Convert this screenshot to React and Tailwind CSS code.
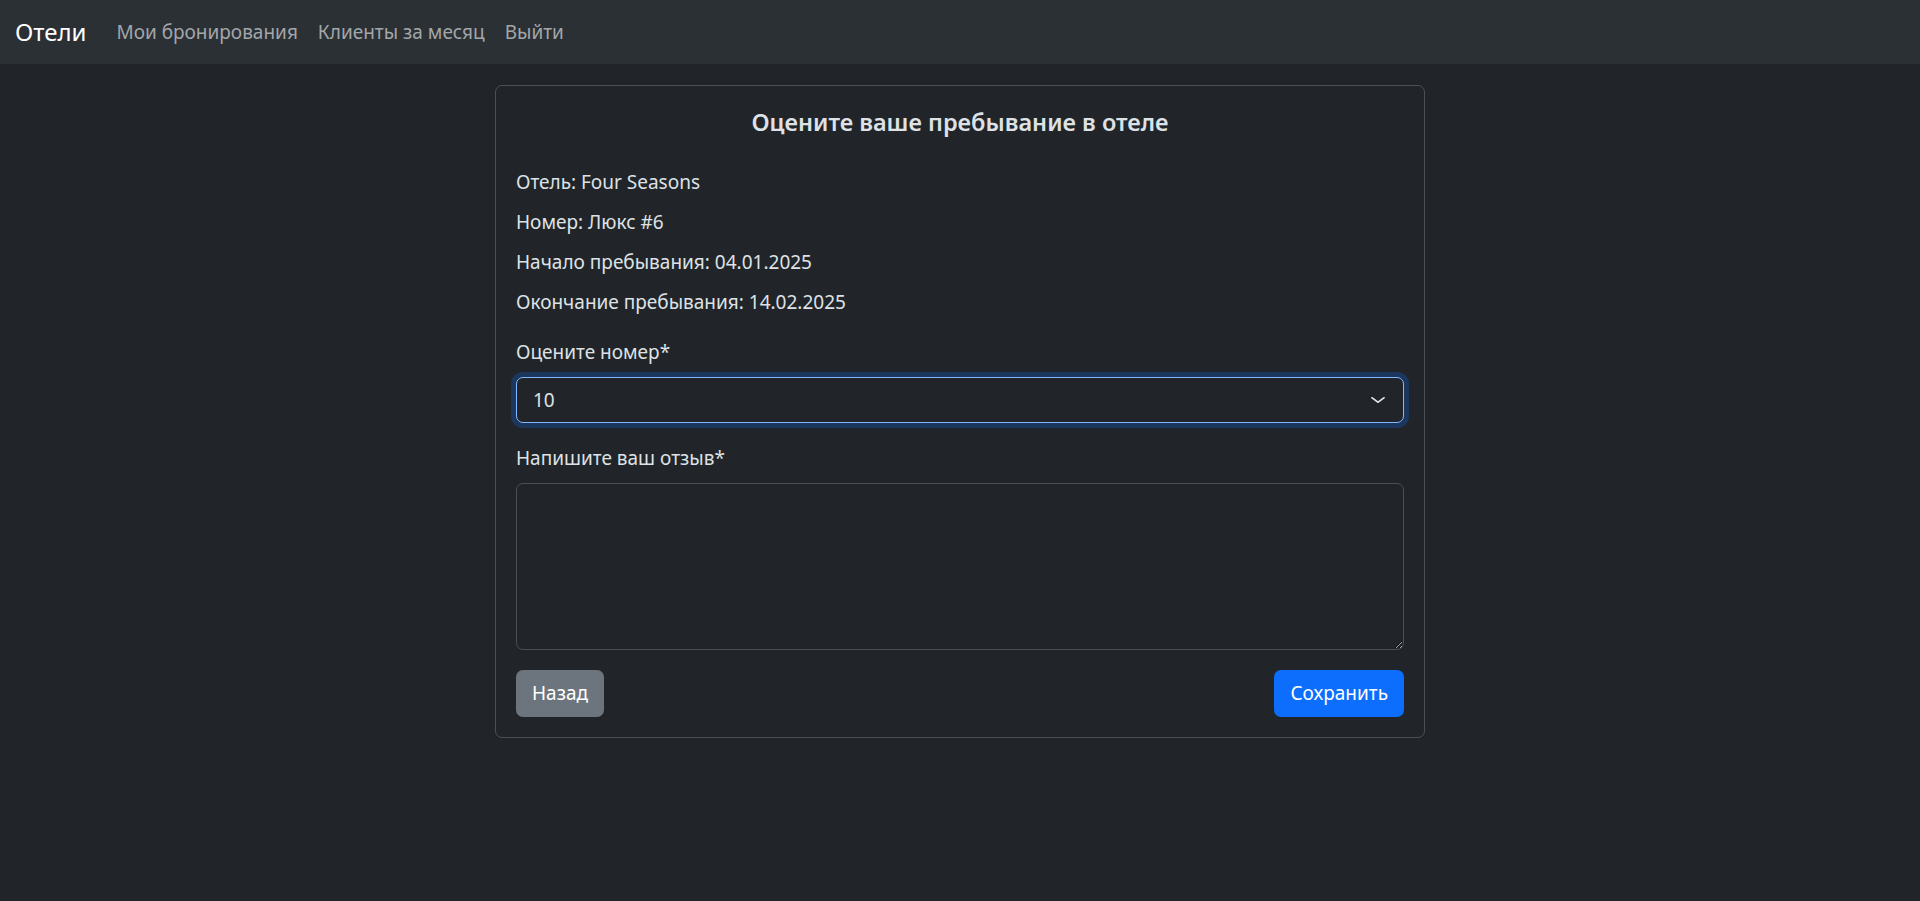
import { useState } from 'react';

const font = 'font-["Segoe_UI","Noto_Sans",sans-serif]';

function Navbar() {
  const links = ['Мои бронирования', 'Клиенты за месяц', 'Выйти'];
  return (
    <nav className="h-[64px] bg-[#2b3035] flex items-center px-[15px]">
      <a className="text-[24px] leading-[30px] text-white mr-[20px]">Отели</a>
      <div className="flex items-center">
        {links.map((link) => (
          <a key={link} className="px-[10px] text-[19px] leading-[30px] text-[#a3a6a9]">
            {link}
          </a>
        ))}
      </div>
    </nav>
  );
}

export default function App() {
  const [rating, setRating] = useState('10');
  const [review, setReview] = useState('');

  const info = [
    'Отель: Four Seasons',
    'Номер: Люкс #6',
    'Начало пребывания: 04.01.2025',
    'Окончание пребывания: 14.02.2025',
  ];

  return (
    <div className={`min-h-screen bg-[#212529] text-[#dee2e6] ${font}`}>
      <Navbar />
      <div className="flex justify-center pt-[21px]">
        <div className="w-[930px] border border-[#495057] rounded-[7px] pt-[21px] px-[20px] pb-[20px]">
          <h5 className="text-center text-[23.5px] leading-[30px] font-semibold mb-[30px]">
            Оцените ваше пребывание в отеле
          </h5>

          {info.map((line) => (
            <p key={line} className="text-[19px] leading-[30px] mb-[10px]">
              {line}
            </p>
          ))}

          <div className="mt-[20px] mb-[20px]">
            <label className="block text-[19px] leading-[30px] mb-[10px]">Оцените номер*</label>
            <div className="relative">
              <select
                value={rating}
                onChange={(e) => setRating(e.target.value)}
                className="w-full h-[46px] appearance-none bg-[#212529] text-[#dee2e6] text-[19px] pl-[16px] pr-[50px] border border-[#86b7fe] rounded-[7px] outline-none shadow-[0_0_0_5px_rgba(13,110,253,0.25)]"
              >
                {['1', '2', '3', '4', '5', '6', '7', '8', '9', '10'].map((n) => (
                  <option key={n} value={n}>{n}</option>
                ))}
              </select>
              <svg
                className="absolute right-[18px] top-[17px] pointer-events-none"
                width="16"
                height="12"
                viewBox="0 0 16 16"
                preserveAspectRatio="none"
                fill="none"
                stroke="#dee2e6"
                strokeWidth="2"
                strokeLinecap="round"
                strokeLinejoin="round"
              >
                <path d="m2 5 6 6 6-6" />
              </svg>
            </div>
          </div>

          <div className="mb-[20px]">
            <label className="block text-[19px] leading-[30px] mb-[10px]">Напишите ваш отзыв*</label>
            <textarea
              value={review}
              onChange={(e) => setReview(e.target.value)}
              className="block w-full h-[167px] bg-[#212529] text-[#dee2e6] text-[19px] px-[15px] py-[8px] border border-[#495057] rounded-[7px] outline-none"
            />
          </div>

          <div className="flex justify-between">
            <button className="h-[47px] px-[16px] bg-[#6c757d] text-white text-[19px] rounded-[7px]">
              Назад
            </button>
            <button className="h-[47px] px-[16px] bg-[#0d6efd] text-white text-[19px] rounded-[7px]">
              Сохранить
            </button>
          </div>
        </div>
      </div>
    </div>
  );
}
